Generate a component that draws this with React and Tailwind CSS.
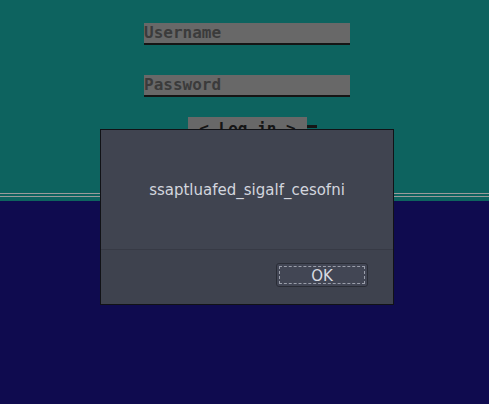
import React from 'react';

export default function App() {
    return (
        <div className="relative w-[489px] h-[404px] overflow-hidden bg-[#0f0b4f]">
            <div className="h-[201px] bg-[#0d635f] flex flex-col">
                <div className="ml-[144px] w-[206px] mt-[23px] flex flex-col" style={{ fontFamily: '"DejaVu Sans Mono", monospace' }}>
                    <div className="h-[20px] bg-[#686868] border-b-2 border-[#151515] box-content text-[16px] font-bold leading-[20px] text-[#3b3b3b]">
                        Username
                    </div>
                    <div className="h-[20px] mt-[30px] bg-[#686868] border-b-2 border-[#151515] box-content text-[16px] font-bold leading-[20px] text-[#3b3b3b]">
                        Password
                    </div>
                    <div className="mt-[20px] ml-[44px] flex items-end">
                        <div className="w-[119px] h-[22px] bg-[#686868] text-[16px] font-bold leading-[24px] text-[#151515] text-center whitespace-pre">
                            {'< Log in >'}
                        </div>
                        <div className="w-[10px] h-[3px] bg-[#151515] mb-[11px]"></div>
                    </div>
                </div>
                <div className="mt-auto h-[1px] bg-[#9a9a9a]"></div>
                <div className="h-[2px]"></div>
                <div className="h-[1px] bg-[#9a9a9a]"></div>
                <div className="h-[4px]"></div>
            </div>

            <div
                className="absolute left-[100px] top-[129px] w-[294px] h-[176px] border border-[#111216] bg-[#3e424e] flex flex-col"
                style={{ fontFamily: '"DejaVu Sans", sans-serif' }}
            >
                <div className="h-[119px] bg-[#404450] flex items-center justify-center text-[15px] text-[#d3d6de] pt-[1px]">
                    ssaptluafed_sigalf_cesofni
                </div>
                <div className="h-[1px] bg-[#373a45]"></div>
                <div className="flex-1 flex justify-end pr-[25px] pt-[13px]">
                    <button className="w-[92px] h-[24px] rounded-[3px] border border-[#2a2d36] bg-[#424654] p-[2px]">
                        <div className="w-full h-full border border-dashed border-[#9a9eaa] flex items-center justify-center text-[15px] text-[#d8dbe2] leading-[18px] pt-[1px]">
                            OK
                        </div>
                    </button>
                </div>
            </div>
        </div>
    );
}
